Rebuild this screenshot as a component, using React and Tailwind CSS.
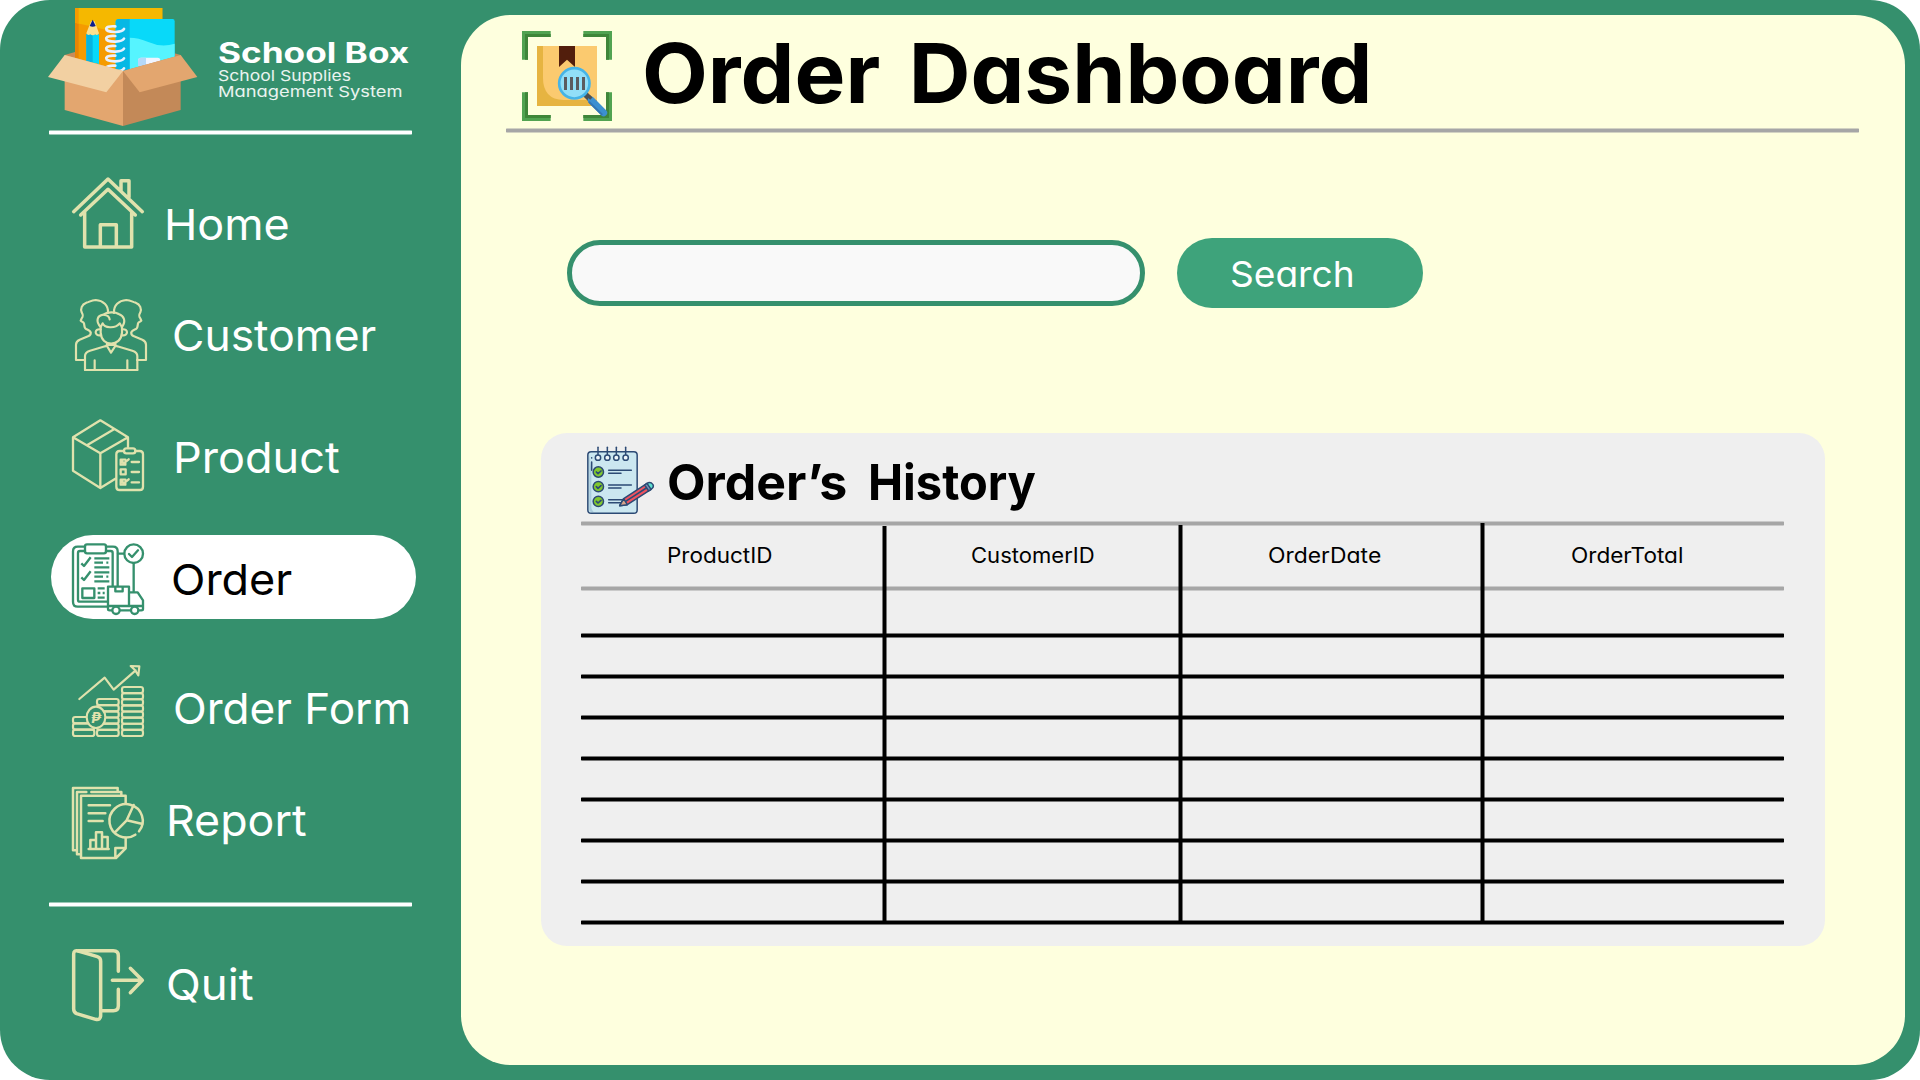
import React from "react";

const line = { fill: "none", stroke: "currentColor", strokeLinecap: "round", strokeLinejoin: "round" };

function Icon({ children, width = 6 }) {
  return (
    <svg viewBox="0 0 216 216" className="size-[72px] shrink-0 overflow-visible" {...line} strokeWidth={width}>
      {children}
    </svg>
  );
}

const HomeIcon = () => (
  <Icon width={10.5}>
    <path d="M5 104 108 6l103 98M26 114l82-77 82 77M38 104v106h141V104M85 210v-67h48v67M147 41V11h24v50" />
  </Icon>
);

const CustomerIcon = () => {
  const back = "M99 42C101 18 84 5 62 3C48 3 42 10 34 11C20 16 16 30 20 40C25 49 25 52 20 58L17 65C20 69 25 68 27 73C28 80 28 88 33 90C39 93 47 95 47 101C48 106 44 110 39 112L14 122C5 126 3 129 3 137V183H30";
  return (
    <Icon width={6.5}>
      <path d={back} />
      <path d={back} transform="matrix(-1 0 0 1 216 0)" />
      <path d="M77 84C62 68 65 50 85 47C96 38 121 38 131 45C147 51 154 66 141 84" />
      <path d="M77 84C79 78 82 76 83 73C88 86 119 91 134 73C136 77 140 81 141 86V101C138 145 79 145 77 101V84" />
      <path d="M88 48C98 49 103 54 104 61" />
      <path d="M77 91C57 88 57 112 77 109M141 91C161 88 161 112 141 109" />
      <path d="M30 213V171C30 161 36 158 45 155L90 142C96 141 96 138 96 132M187 213V171C187 161 181 158 172 155L127 142C121 141 121 138 121 132M96 141L108 161L121 141M98 138H119" />
      <path d="M30 213H187M59 184V213M157 184V213" />
    </Icon>
  );
};

const ProductIcon = () => (
  <Icon width={7}>
    <path d="M168 84V55L85 4 3 55v100l82 52 45-28M3 55l82 48 83-48M85 103v104M126 31 46 78" />
    <path d="M156 96h-13q-10 0-10 10v97q0 10 10 10h60q10 0 10-10v-97q0-10-10-10h-13" />
    <rect x="156" y="88" width="34" height="15" rx="7" />
    <rect x="146" y="151" width="15" height="15" />
    <path d="M160 122h-14v15h14v-4M151 128l4 5 15-12M160 182h-14v15h14v-4M151 188l4 5 15-12M179 129h22M179 159h22M179 190h22" />
  </Icon>
);

const OrderIcon = () => (
  <Icon width={7}>
    <path d="M39 11H17Q3 11 3 25v151q0 15 14 15h89M102 11h21q14 0 14 14v104" />
    <path d="M39 24H24q-6 0-6 6v140q0 6 6 6h82M102 24h14q6 0 6 6v99" />
    <rect x="39" y="4" width="63" height="27" rx="6" />
    <path d="m28 61 8 8 20-26M28 103l8 8 20-26" strokeLinecap="butt" />
    <path d="M67 46h45M67 59h26M103 59h6M67 73h45M67 88h45M67 101h26M103 101h6M67 115h45M77 136h21M77 150h8M92 150h6M77 164h21" strokeLinecap="butt" />
    <rect x="31" y="136" width="36" height="29" />
    <circle cx="185" cy="32" r="28" />
    <path d="m171 33 9 9 18-20M138 32h18M185 61v84" />
    <path d="M108 189v-58h63v58M130 131v14h22v-14M171 148h26l16 24v26q0 4-5 4h-8M108 189h105M108 189v9q0 4 5 4h7M145 202h30" />
    <circle cx="132" cy="202" r="11" />
    <circle cx="188" cy="202" r="11" />
  </Icon>
);

const stack = (x, w, top, n) => {
  const h = (213 - top) / n;
  return Array.from({ length: n }, (_, i) => (
    <rect key={`${x}-${i}`} x={x} y={top + i * h} width={w} height={h} rx="7" />
  ));
};

const OrderFormIcon = () => (
  <Icon width={6.5}>
    <path d="M22 102 98 38l27 36 66-58M176 3l26 1-3 27-10-16Z" />
    {stack(150, 63, 66, 8)}
    {stack(75, 65, 102, 6)}
    {stack(3, 64, 156, 3)}
    <ellipse cx="72" cy="157" rx="28" ry="32" fill="#35906d" />
    <text x="72" y="173" textAnchor="middle" fontSize="44" fill="currentColor" stroke="none" fontStyle="italic" fontWeight="700" fontFamily="Inter, sans-serif">₱</text>
  </Icon>
);

const ReportIcon = () => (
  <Icon width={7.5}>
    <path d="M10 190H3V3h134v8M22 202h-7V15h28M58 15h90v8" />
    <path d="M161 48V26H27v187h105l29-29v-31M130 213v-30h31" />
    <path d="M50 55h64M50 79h50M50 102h42M50 186h60M55 186v-27h17M72 186v-50h18v50M90 150h17v36" />
    <path d="M190 143A50 50 0 1 1 201 133M164 100l21-46M164 100l48 11M164 100l-33 34" />
  </Icon>
);

const QuitIcon = () => (
  <Icon width={10.5}>
    <path d="M5 16Q5 2 19 6L76 23Q86 26 86 37V199Q86 214 71 211L14 194Q5 190 5 180Z" />
    <path d="M18 5h106q15 0 15 15v47M139 121v49q0 15-15 15H88M121 94h88M175 58l36 36-36 37" />
    <path d="M22 6h30l-8 4Z" fill="currentColor" strokeWidth="3" />
  </Icon>
);

const BoxLogo = () => (
  <svg viewBox="0 0 480 390" className="h-[130px] w-[160px] shrink-0">
    <path d="M59 165 90 156V180ZM407 165 388 160V180Z" fill="#c98b5a" />
    <path d="M90 24H352V212H90Z" fill="#f59b00" />
    <path d="M90 24H352V76Q330 62 290 66Q230 95 175 88Q130 76 90 68Z" fill="#f5b800" />
    <path d="M90 68 101 71V190H90Z" fill="#e88504" />
    <path d="M90 24H101V71L90 68Z" fill="#f59b00" />
    <path d="M124 103H162V192L124 184Z" fill="#08d9f9" />
    <path d="M124 103H143V190L124 184Z" fill="#08b4e0" />
    <path d="M138 64H149L162 100Q157 108 151 103Q143 109 136 103Q129 108 124 100Z" fill="#fbe08f" />
    <path d="M143 59 152 78Q143 83 134 78Z" fill="#0c1d8e" />
    <path d="M222 57H383Q389 57 389 64V190L234 213 212 205V66Q212 57 222 57Z" fill="#08d9f9" />
    <path d="M254 113Q280 113 310 126Q350 144 389 131V190L254 212Z" fill="#56f4ff" />
    <path d="M222 57H254V212H212V66Q212 57 222 57Z" fill="#06b8e4" />
    <path d="M279 182Q279 173 288 173H338Q346 173 346 182V198H279Z" fill="#f0f4ff" />
    <path d="M279 182Q279 173 288 173H303V198H279Z" fill="#b5d8f8" />
    {[88, 117, 147, 176, 206].map((y) => (
      <path key={y} d={`M211 ${y - 9}C174 ${y - 12} 175 ${y + 9} 212 ${y + 8}Q232 ${y + 7} 237 ${y - 1}`} fill="none" stroke="#e8f1ff" strokeWidth="8" strokeLinecap="round" />
    ))}
    <path d="M59 165 234 213V378L59 330Z" fill="#e3a66f" />
    <path d="M407 165 234 213V378L407 330Z" fill="#c38958" />
    <path d="M59 165 234 213 184 277 9 231Z" fill="#f2d0a2" />
    <path d="M407 165 234 213 284 277 457 231Z" fill="#e3a66f" />
  </svg>
);

const ParcelSearchIcon = () => (
  <svg viewBox="0 0 270 270" className="size-[90px] shrink-0">
    {["", "matrix(-1 0 0 1 270 0)", "matrix(1 0 0 -1 0 270)", "matrix(-1 0 0 -1 270 270)"].map((t) => (
      <g key={t} transform={t || undefined}>
        <path d="M0 0H86V18H18V86H0Z" fill="#51a351" />
        <path d="M9 9H86V18H18V86H9Z" fill="#3f8639" />
      </g>
    ))}
    <path d="M45 45H225V225H45Z" fill="#e6b441" />
    <path d="M63 45H225V207H125Q63 205 63 140Z" fill="#fbca6f" />
    <path d="M111 45H159V108L135 86 111 108Z" fill="#521e0c" />
    <path d="m188 188 20 20" stroke="#4b5054" strokeWidth="17" />
    <path d="m208 208 37 37" stroke="#3c90d0" strokeWidth="21" strokeLinecap="round" />
    <path d="m202 214 37 36" stroke="#3477b4" strokeWidth="6" strokeLinecap="round" />
    <path d="m201 203 7-7" stroke="#4b5054" strokeWidth="10" />
    <circle cx="157" cy="157" r="45.5" fill="#92dff8" stroke="#46b4e7" strokeWidth="8" />
    <path d="M130.5 138V177M148.5 138V177M166.5 138V177M184.5 138V177" stroke="#5b5b60" strokeWidth="9" />
  </svg>
);

const NotepadIcon = () => (
  <svg viewBox="0 0 270 240" className="h-20 w-[90px] shrink-0" fill="none" stroke="#2c4a74" strokeWidth="4.5" strokeLinecap="round" strokeLinejoin="round">
    <rect x="38.5" y="35" width="148" height="185" rx="10" fill="#cbe7f0" />
    <path d="M43 42V210Q44 216 50 216H56Q49 210 49 200V90Z" fill="#a9cbdc" stroke="none" />
    <path d="M50 53v1M50 66V91" />
    {[69, 97, 124, 152].map((x) => (
      <g key={x}>
        <path d={`M${x} 22V45`} />
        <circle cx={x} cy="53" r="8" fill="#eef6fa" />
      </g>
    ))}
    {[96, 140, 184].map((y) => (
      <g key={y}>
        <circle cx="70" cy={y} r="15.5" fill="#80c82e" />
        <path d={`m64 ${y} 5 5 9-8`} strokeWidth="5" />
        <path d={`M101 ${y - 5}H${y === 184 ? 148 : 169}M101 ${y + 4}H138`} />
      </g>
    ))}
    <path d="M146 176 215 131 227 149 157 194 134 197Z" fill="#f0525f" />
    <path d="M146 176 157 194 134 197Z" fill="#d9a489" />
    <path d="M215 131Q226 123 234 134Q238 142 227 149Z" fill="#5fe0d0" />
    <path d="M209 135 216 130 228 148 221 153Z" fill="#7b93b5" />
    <path d="M152 184 214 144" />
  </svg>
);

const face = "block origin-left leading-none whitespace-nowrap [font-feature-settings:'cv11']";

const nav = [
  { label: "Home", icon: <HomeIcon />, row: "mt-[42px] pl-[72px]", text: "ml-5 mt-[26px] scale-x-[1.044]" },
  { label: "Customer", icon: <CustomerIcon />, row: "mt-[50px] pl-[75px]", text: "ml-[25px] mt-[15px] scale-x-[1.032]" },
  { label: "Product", icon: <ProductIcon />, row: "mt-12 pl-[72px]", text: "ml-[29px] mt-[17px] scale-x-[1.048]" },
  { label: "Order", icon: <OrderIcon />, active: true, row: "", text: "ml-[27px] mt-[15px] scale-x-[1.046]" },
  { label: "Order Form", icon: <OrderFormIcon />, row: "mt-[46px] pl-[72px]", text: "ml-[29px] mt-[22px] scale-x-[1.026]" },
  { label: "Report", icon: <ReportIcon />, row: "mt-[50px] pl-[72px]", text: "ml-[22px] mt-3 scale-x-[1.04]" },
];

function NavItem({ item }) {
  const state = item.active
    ? "mt-11 ml-[51px] h-[84px] w-[365px] rounded-full bg-white pt-2 pl-[21px] text-[#35906d]"
    : "h-[72px] text-[#e0e2ad]";
  return (
    <a className={`flex shrink-0 items-start ${state} ${item.row}`}>
      {item.icon}
      <span className={`${face} text-[43px] ${item.active ? "text-black" : "text-white"} ${item.text}`}>{item.label}</span>
    </a>
  );
}

const SideRule = ({ className = "" }) => (
  <div className={`ml-[49px] h-[5px] w-[363px] shrink-0 rounded-[1px] border-y border-white/50 bg-white bg-clip-padding ${className}`} />
);

const GreyRule = ({ className = "" }) => (
  <div className={`h-[5px] shrink-0 rounded-[1px] border-y border-[#a6a6a6]/50 bg-[#a6a6a6] bg-clip-padding ${className}`} />
);

const columns = [
  { label: "ProductID", cls: "pl-[86px]", scale: "scale-x-[1.07]" },
  { label: "CustomerID", cls: "pl-[89px]", scale: "scale-x-[1.05]" },
  { label: "OrderDate", cls: "pl-[90px]", scale: "scale-x-[1.09]" },
  { label: "OrderTotal", cls: "pl-[91px]", scale: "scale-x-[1.075]" },
];

const dividers = ["left-[301px] top-[5px]", "left-[597px] top-1", "left-[899px] top-0.5"];

export default function App() {
  return (
    <div className="h-[1080px] w-[1920px] overflow-hidden bg-white font-['Inter',sans-serif]">
      <div className="flex h-full w-full rounded-[50px] bg-[#35906d]">
        <aside className="flex w-[461px] shrink-0 flex-col">
          <div className="flex h-[130px] shrink-0 pl-[45px] text-white">
            <BoxLogo />
            <div className="ml-[13px] flex flex-col">
              <span className={`${face} mt-[39px] scale-x-[1.256] text-[28px] font-bold`}>School Box</span>
              <span className={`${face} mt-px scale-x-[1.17] text-[15px] text-white/90`}>School Supplies</span>
              <span className={`${face} mt-px scale-x-[1.22] text-[15px] text-white/90`}>Management System</span>
            </div>
          </div>
          <SideRule />
          <nav className="flex flex-col">
            {nav.map((item) => (
              <NavItem key={item.label} item={item} />
            ))}
          </nav>
          <SideRule className="mt-[43px]" />
          <NavItem
            item={{ label: "Quit", icon: <QuitIcon />, row: "mt-[42px] pl-[72px]", text: "ml-[22px] mt-3.5 scale-x-[1.06]" }}
          />
        </aside>

        <main className="mt-[15px] flex h-[1050px] w-[1444px] flex-col rounded-[50px] bg-[#feffde]">
          <header className="flex h-[113px] shrink-0 pt-4 pl-[61px]">
            <ParcelSearchIcon />
            <h1 className={`${face} mt-px ml-[30px] scale-x-[1.03] text-[83px] font-bold [word-spacing:8px]`}>Order Dashboard</h1>
          </header>
          <GreyRule className="ml-[45px] w-[1353px]" />

          <div className="mt-[105px] ml-[106px] flex h-[70px] shrink-0 items-start">
            <input className="mt-0.5 h-[66px] w-[578px] rounded-full border-5 border-[#35906d] bg-[#f9f9f9] px-8 text-2xl outline-none" />
            <button className="ml-8 h-[70px] w-[246px] rounded-[35px] bg-[#3ea37b] pl-[53px] text-white">
              <span className={`${face} mt-px w-fit scale-x-[1.03] text-[36px]`}>Search</span>
            </button>
          </div>

          <section className="mt-[125px] ml-20 flex h-[513px] w-[1284px] shrink-0 flex-col rounded-[26px] bg-[#efefef]">
            <div className="flex h-[88px] shrink-0 pt-[7px] pl-[34px]">
              <NotepadIcon />
              <h2 className={`${face} mt-[17px] ml-0.5 text-[50px] font-bold [word-spacing:9px]`}>
                Order’s <span className="inline-block origin-left scale-x-[0.94]">History</span>
              </h2>
            </div>
            <div className="relative ml-10 w-[1203px]">
              <GreyRule />
              <div className="grid h-[60px] grid-cols-[301px_296px_302px_304px] pt-[19px] text-[21px]">
                {columns.map((c) => (
                  <div key={c.label} className={c.cls}>
                    <span className={`${face} w-fit ${c.scale}`}>{c.label}</span>
                  </div>
                ))}
              </div>
              <GreyRule />
              {Array.from({ length: 8 }, (_, i) => (
                <div key={i} className={i === 0 ? "pt-[42px]" : "pt-9"}>
                  <div className="h-[5px] rounded-[1px] border-y border-black/50 bg-black bg-clip-padding" />
                </div>
              ))}
              {dividers.map((pos) => (
                <div key={pos} className={`absolute bottom-1 w-[5px] border-x border-black/50 bg-black bg-clip-padding ${pos}`} />
              ))}
            </div>
          </section>
        </main>
      </div>
    </div>
  );
}
